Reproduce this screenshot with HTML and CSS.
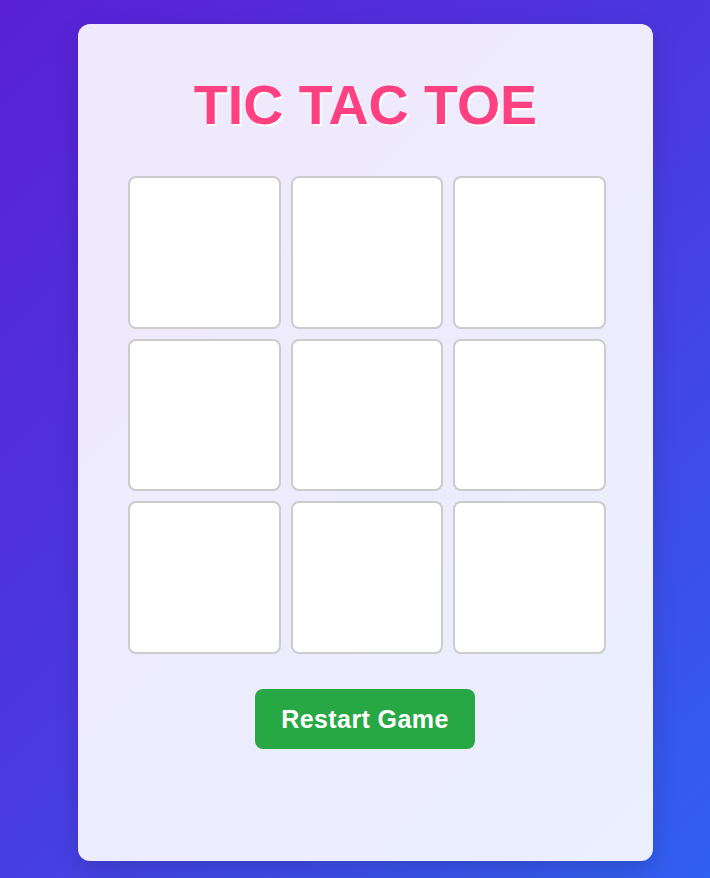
FILE: index.html
```html
<!DOCTYPE html>
<html lang="en">
<head>
<meta charset="UTF-8">
<title>Tic Tac Toe</title>
<link rel="stylesheet" href="styles.css">
</head>
<body>
<main class="card">
  <h1 class="title">TIC TAC TOE</h1>
  <div class="board">
    <button class="cell"></button>
    <button class="cell"></button>
    <button class="cell"></button>
    <button class="cell"></button>
    <button class="cell"></button>
    <button class="cell"></button>
    <button class="cell"></button>
    <button class="cell"></button>
    <button class="cell"></button>
  </div>
  <button class="restart">Restart Game</button>
</main>
</body>
</html>
```

FILE: styles.css
```css
html, body {
  margin: 0;
  height: 100%;
}
body {
  box-sizing: border-box;
  display: flex;
  padding: 24px 57px 17px 78px;
  background: linear-gradient(135deg, #5a20d6 0%, #4a3ae0 50%, #3060f0 100%);
  font-family: "Liberation Sans", Arial, sans-serif;
}
.card {
  flex: 1;
  display: flex;
  flex-direction: column;
  align-items: center;
  padding-top: 49px;
  background: rgba(255, 255, 255, 0.9);
  border-radius: 12px;
  box-shadow: 0 8px 24px rgba(0, 0, 0, 0.15);
}
.title {
  margin: 0;
  font-size: 55.5px;
  font-weight: 700;
  line-height: normal;
  color: #ff4081;
  text-shadow: 2px 2px 0 #ffffff;
}
.board {
  margin-top: 39px;
  align-self: flex-start;
  margin-left: 50px;
  width: 478px;
  height: 478px;
  display: grid;
  grid-template-columns: repeat(3, 1fr);
  grid-template-rows: repeat(3, 1fr);
  gap: 10px;
}
.cell {
  box-sizing: border-box;
  background: #ffffff;
  border: 2px solid #cccccc;
  border-radius: 8px;
  padding: 0;
}
.restart {
  margin-top: 35px;
  margin-right: 1px;
  width: 220px;
  height: 60px;
  border: none;
  border-radius: 8px;
  background: #28a745;
  color: #ffffff;
  font-family: "Liberation Sans", Arial, sans-serif;
  font-size: 25px;
  font-weight: 700;
  letter-spacing: 0.4px;
}
```
